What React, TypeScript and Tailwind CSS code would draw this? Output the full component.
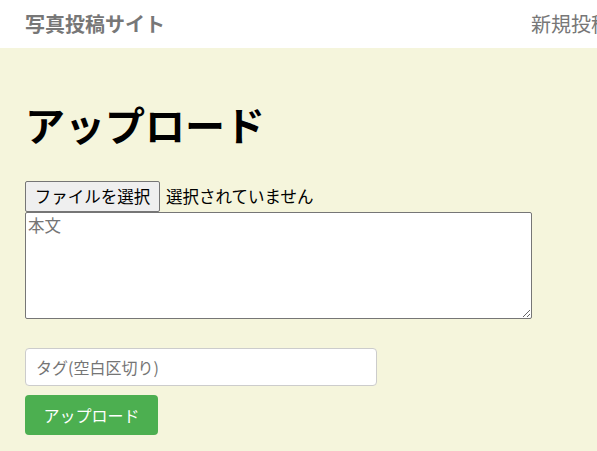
export default function App() {
  return (
    <div className="min-h-[451px] w-[597px] overflow-hidden bg-[#f5f5dc] font-['Noto_Sans_CJK_JP',sans-serif] text-black">
      <header className="flex h-12 items-center overflow-hidden bg-white pl-[25px] whitespace-nowrap">
        <div className="shrink-0 text-[20px] font-bold text-[#777777]">写真投稿サイト</div>
        <div className="ml-[366px] shrink-0 text-[20px] text-[#777777]">新規投稿</div>
      </header>
      <main className="px-[25px] pt-[46px]">
        <h1 className="text-[40px] font-bold leading-[60px]">アップロード</h1>
        <div className="mt-[27px] flex flex-col items-start">
          <div className="flex h-[31px] items-center text-[16.5px]">
            <button className="h-[31px] w-[135px] rounded-[2px] border border-[#767676] bg-[#efefef] px-0 text-[16.5px] text-black">
              ファイルを選択
            </button>
            <span className="ml-[6px]">選択されていません</span>
          </div>
          <textarea
            placeholder="本文"
            className="block h-[107px] w-[507px] rounded-[2px] border border-[#767676] bg-white px-[2px] py-0 text-[16.5px] leading-[24px] placeholder:text-[#757575]"
          />
          <input
            placeholder="タグ(空白区切り)"
            className="mt-[29px] block h-[38px] w-[352px] rounded-[4px] border border-[#cccccc] bg-white px-[10px] text-[16px] placeholder:text-[#757575]"
          />
          <button className="mt-[9px] flex h-[40px] w-[133px] items-center justify-center rounded-[4px] bg-[#4caf50] text-[16px] text-white">
            アップロード
          </button>
        </div>
      </main>
    </div>
  );
}
